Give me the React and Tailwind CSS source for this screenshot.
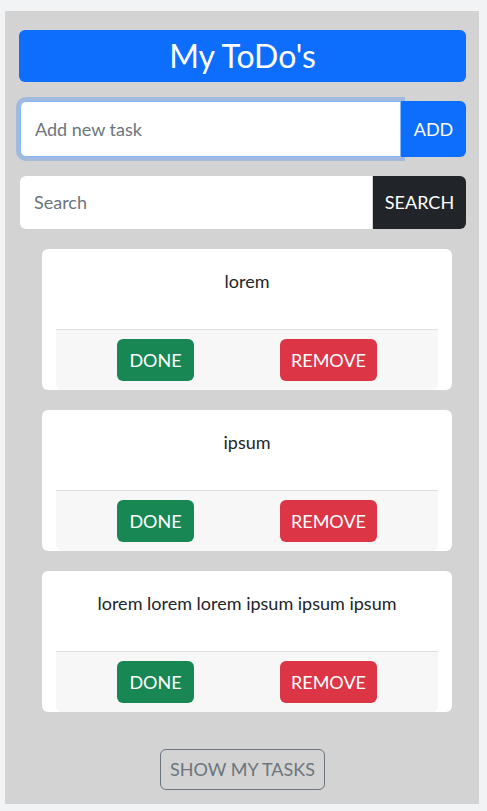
import React, { useState } from "react";

const tasks = ["lorem", "ipsum", "lorem lorem lorem ipsum ipsum ipsum"];

const TaskCard = ({ text }) => {
  return (
    <div className="bg-white rounded-md px-[14px] w-[410px] ml-[23px]">
      <div className="h-[80px] pt-[18px] text-center text-[18px] leading-[28px] text-[#212529]">
        {text}
      </div>
      <div className="bg-[#f7f7f7] border-t border-[#dfdfdf] rounded-b-md h-[61px] flex items-center pl-[61px] gap-[86px]">
        <button className="bg-[#198754] text-white text-[18px] h-[42px] w-[77px] rounded-md">
          DONE
        </button>
        <button className="bg-[#dc3545] text-white text-[18px] h-[42px] w-[97px] rounded-md">
          REMOVE
        </button>
      </div>
    </div>
  );
};

export default function App() {
  const [task, setTask] = useState("");
  return (
    <div
      className="min-h-[811px] bg-[#f1f3f4] pt-[11px] pl-[5px] pr-[8px] pb-[6px]"
      style={{ fontFamily: "Lato, 'Noto Sans', sans-serif" }}
    >
      <div className="bg-[#d3d3d3] pt-[19px] pl-[14px] pr-[13px] pb-[14px]">
        <div className="bg-[#0d6efd] rounded-md h-[52px] flex items-center justify-center text-white text-[32px]">
          My ToDo's
        </div>

        <div className="flex mt-[19px] h-[56px] pl-px">
          <input
            autoFocus
            value={task}
            onChange={(e) => setTask(e.target.value)}
            placeholder="Add new task"
            className="flex-1 bg-white border border-[#86b7fe] rounded-l-md px-[14px] text-[18px] text-[#212529] placeholder:text-[#6c757d] outline-none shadow-[0_0_0_4px_rgba(13,110,253,0.25)] relative z-10"
          />
          <button className="w-[65px] bg-[#0d6efd] text-white text-[18px] rounded-r-md">
            ADD
          </button>
        </div>

        <div className="flex mt-[19px] h-[53px] pl-px">
          <input
            placeholder="Search"
            className="flex-1 bg-white rounded-l-md px-[14px] text-[18px] placeholder:text-[#6c757d] outline-none"
          />
          <button className="w-[93px] ml-px bg-[#212529] text-white text-[18px] rounded-r-md">
            SEARCH
          </button>
        </div>

        <div className="flex flex-col gap-[20px] mt-[20px]">
          {tasks.map((t, i) => (
            <TaskCard key={i} text={t} />
          ))}
        </div>

        <div className="flex justify-center mt-[37px]">
          <button className="border border-[#6c757d] text-[#6c757d] text-[18px] rounded-md h-[41px] w-[165px]">
            SHOW MY TASKS
          </button>
        </div>
      </div>
    </div>
  );
}
